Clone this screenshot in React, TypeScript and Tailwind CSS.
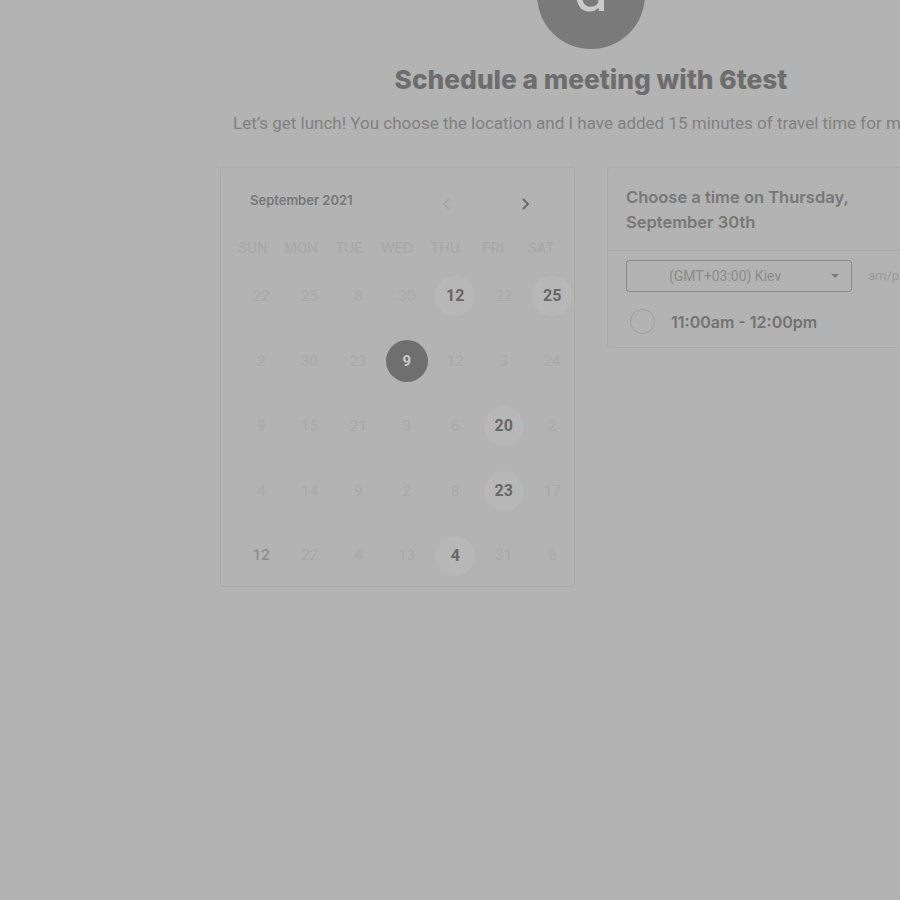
import React from 'react';

type Day = { n: number; kind?: 'off' | 'open' | 'picked' | 'dim' };

const WEEKDAYS = ['SUN', 'MON', 'TUE', 'WED', 'THU', 'FRI', 'SAT'];

const WEEKS: Day[][] = [
  [{ n: 22 }, { n: 25 }, { n: 8 }, { n: 30 }, { n: 12, kind: 'open' }, { n: 22 }, { n: 25, kind: 'open' }],
  [{ n: 2 }, { n: 30 }, { n: 23 }, { n: 9, kind: 'picked' }, { n: 12 }, { n: 3 }, { n: 24 }],
  [{ n: 9 }, { n: 15 }, { n: 21 }, { n: 3 }, { n: 6 }, { n: 20, kind: 'open' }, { n: 2 }],
  [{ n: 4 }, { n: 14 }, { n: 9 }, { n: 2 }, { n: 8 }, { n: 23, kind: 'open' }, { n: 17 }],
  [{ n: 12, kind: 'dim' }, { n: 22 }, { n: 4 }, { n: 13 }, { n: 4, kind: 'open' }, { n: 31 }, { n: 6 }],
];

function DayCell({ n, kind }: Day) {
  if (kind === 'picked') {
    return (
      <div className="flex h-[42px] w-[42px] items-center justify-center rounded-full bg-[#6f6f6f] text-[15px] font-bold text-[#c9c9c9]">
        {n}
      </div>
    );
  }
  if (kind === 'open') {
    return (
      <div className="flex h-10 w-10 items-center justify-center rounded-full bg-[#b7b7b7] text-[16px] font-bold text-[#676767]">
        {n}
      </div>
    );
  }
  return (
    <span
      className={
        kind === 'dim'
          ? 'text-[15px] font-medium text-[#8d8d8d]'
          : 'text-[15px] text-[#a8a8a8]'
      }
    >
      {n}
    </span>
  );
}

function Calendar() {
  return (
    <div className="h-[420px] w-[355px] shrink-0 rounded-[3px] border border-[#aaaaaa]">
      <div className="flex h-[40px] items-end">
        <span className="ml-[29px] whitespace-nowrap font-['Inter',sans-serif] text-[13px] font-semibold leading-[16px] text-[#777777]">
          September 2021
        </span>
        <div className="flex-1" />
        <svg className="mb-[-3px]" width="10" height="14" viewBox="0 0 10 14" fill="none">
          <path d="M7 2 2 7l5 5" stroke="#a4a4a4" strokeWidth="1.6" />
        </svg>
        <svg className="mb-[-3px] ml-[68px] mr-[44px]" width="10" height="14" viewBox="0 0 10 14" fill="none">
          <path d="m3 2 5 5-5 5" stroke="#6a6a6a" strokeWidth="2" />
        </svg>
      </div>
      <div className="ml-[8px] mt-[23px] grid grid-cols-[repeat(7,48px)] font-['Roboto',sans-serif] text-[15px] text-[#a6a6a6]">
        {WEEKDAYS.map((w) => (
          <div key={w} className="flex h-[34px] items-center justify-center">
            {w}
          </div>
        ))}
      </div>
      <div className="ml-[16px] mt-[-1px] grid grid-cols-[repeat(7,48.5px)] font-['Roboto',sans-serif]">
        {WEEKS.flat().map((d, i) => (
          <div key={i} className="flex h-[64.8px] items-center justify-center">
            <DayCell {...d} />
          </div>
        ))}
      </div>
    </div>
  );
}

function TimePanel() {
  return (
    <div className="h-[181px] w-[320px] shrink-0 rounded-l-[3px] border border-r-0 border-[#aaaaaa]">
      <div className="h-[83px] border-b border-[#aaaaaa] pl-[18px] pt-[17px] font-['Inter',sans-serif] text-[16.5px] font-semibold leading-[25px] text-[#777777]">
        Choose a time on Thursday,
        <br />
        September 30th
      </div>
      <div className="flex items-center pl-[18px] pt-[9px] font-['Roboto',sans-serif]">
        <div className="flex h-[32px] w-[226px] shrink-0 items-center rounded-[3px] border border-[#8a8a8a] pl-[42px] pr-[12px] text-[14px] text-[#8a8a8a]">
          <span className="flex-1">(GMT+03:00) Kiev</span>
          <svg width="8" height="5" viewBox="0 0 8 5">
            <path d="M0 0h8L4 4z" fill="#7a7a7a" />
          </svg>
        </div>
        <span className="ml-[16px] whitespace-nowrap text-[13px] text-[#9a9a9a]">am/pm</span>
      </div>
      <div className="flex items-center pl-[22px] pt-[17px]">
        <div className="h-[25px] w-[25px] rounded-full border-[1.5px] border-[#9c9c9c]" />
        <span className="ml-[16px] font-['Inter',sans-serif] text-[16px] font-semibold text-[#727272]">
          11:00am - 12:00pm
        </span>
      </div>
    </div>
  );
}

export default function App() {
  return (
    <div className="h-[900px] w-[900px] overflow-hidden bg-[#b3b3b3]">
      <div className="ml-[220px] flex w-[742px] flex-col">
        <div className="mx-auto mt-[-59px] flex h-[108px] w-[108px] items-end justify-center overflow-hidden rounded-full bg-[#7a7a7a] pb-[28px]">
          <span className="font-['Roboto',sans-serif] text-[62px] leading-none text-[#cacaca]">d</span>
        </div>
        <h1 className="mt-[16px] whitespace-nowrap text-center font-['Inter',sans-serif] text-[26.3px] font-extrabold leading-[30px] text-[#6d6d6d]">
          Schedule a meeting with 6test
        </h1>
        <p className="mt-[18px] whitespace-nowrap pl-[13px] font-['Roboto',sans-serif] text-[17px] leading-[20px] text-[#808080]">
          Let’s get lunch! You choose the location and I have added 15 minutes of travel time for me.
        </p>
        <div className="mt-[34px] flex gap-[32px]">
          <Calendar />
          <TimePanel />
        </div>
      </div>
    </div>
  );
}
